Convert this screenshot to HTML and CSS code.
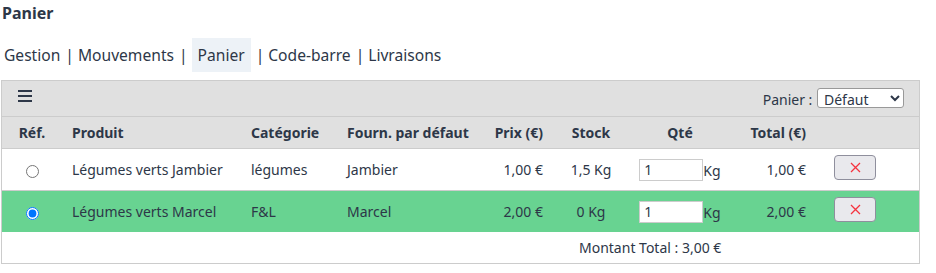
FILE: index.html
```html
<!DOCTYPE html>
<html>
<head>
  <meta charset="utf-8">
  <title>Panier</title>
  <link rel="stylesheet" href="styles.css">
</head>
<body>
  <h1 class="title">Panier</h1>
  <div class="nav">
    <span class="nav-item">Gestion</span><span class="sep">|</span><span class="nav-item">Mouvements</span><span class="sep">|</span><span class="nav-item active">Panier</span><span class="sep">|</span><span class="nav-item">Code-barre</span><span class="sep">|</span><span class="nav-item">Livraisons</span>
  </div>

  <div class="panel">
    <div class="toolbar">
      <div class="burger"><span></span><span></span><span></span></div>
      <label class="basket-select">Panier :
        <select>
          <option>Défaut</option>
        </select>
      </label>
    </div>
    <table class="cart">
      <colgroup>
        <col class="c-ref"><col class="c-prod"><col class="c-cat"><col class="c-four"><col class="c-prix"><col class="c-stock"><col class="c-qte"><col class="c-total"><col class="c-del">
      </colgroup>
      <thead>
        <tr>
          <th class="center">Réf.</th>
          <th>Produit</th>
          <th>Catégorie</th>
          <th>Fourn. par défaut</th>
          <th class="right">Prix (€)</th>
          <th class="center">Stock</th>
          <th class="center">Qté</th>
          <th class="right">Total (€)</th>
          <th></th>
        </tr>
      </thead>
      <tbody>
        <tr>
          <td class="center"><input type="radio" name="ref"></td>
          <td>Légumes verts Jambier</td>
          <td>légumes</td>
          <td>Jambier</td>
          <td class="right">1,00 €</td>
          <td class="center">1,5 Kg</td>
          <td class="center"><input class="qty" type="text" value="1">Kg</td>
          <td class="right">1,00 €</td>
          <td><button class="del"><svg width="11" height="11" viewBox="0 0 11 11"><path d="M1 1L10 10M10 1L1 10" stroke="#f5333f" stroke-width="1.3"/></svg></button></td>
        </tr>
        <tr class="selected">
          <td class="center"><input type="radio" name="ref" checked></td>
          <td>Légumes verts Marcel</td>
          <td>F&amp;L</td>
          <td>Marcel</td>
          <td class="right">2,00 €</td>
          <td class="center">0 Kg</td>
          <td class="center"><input class="qty" type="text" value="1">Kg</td>
          <td class="right">2,00 €</td>
          <td><button class="del"><svg width="11" height="11" viewBox="0 0 11 11"><path d="M1 1L10 10M10 1L1 10" stroke="#f5333f" stroke-width="1.3"/></svg></button></td>
        </tr>
      </tbody>
      <tfoot>
        <tr>
          <td colspan="9" class="sum">Montant Total : 3,00 €</td>
        </tr>
      </tfoot>
    </table>
  </div>
</body>
</html>
```

FILE: styles.css
```css
body {
  margin: 0;
  padding: 0 1px;
  font-family: "Noto Sans", "DejaVu Sans", sans-serif;
  color: #2d3748;
  background-color: #fff;
}

.title {
  margin: 0;
  padding-left: 1px;
  font-size: 16px;
  line-height: 26px;
  font-weight: bold;
}

.nav {
  display: flex;
  align-items: center;
  margin: 12px 0 8px;
  padding-left: 3px;
  font-size: 15.6px;
  height: 34px;
}

.nav-item {
  display: inline-block;
  line-height: 34px;
}

.nav-item.active {
  background-color: #edf2f7;
  padding: 0 6px;
}

.sep {
  padding: 0 4px 0 5px;
}

.panel {
  width: 917px;
  border: 1px solid #ccc;
  font-size: 14px;
}

.toolbar {
  display: flex;
  align-items: center;
  justify-content: space-between;
  height: 35px;
  padding: 0 15px 0 16px;
  background-color: #e0e0e0;
  border-bottom: 1px solid #ccc;
}

.burger {
  display: flex;
  flex-direction: column;
  gap: 3px;
  width: 14px;
  margin-top: -5px;
}

.burger span {
  height: 2px;
  background-color: #2d3748;
}

.basket-select select {
  width: 87px;
  height: 20px;
  margin-left: 1px;
  padding: 0 2px;
  font-family: inherit;
  font-size: 14px;
  color: #2d3748;
  background-color: #fff;
  border: 1px solid #999;
  border-radius: 3px;
}

.cart {
  width: 100%;
  border-collapse: collapse;
  table-layout: fixed;
}

.c-ref { width: 60px; }
.c-prod { width: 179px; }
.c-cat { width: 96px; }
.c-four { width: 123px; }
.c-prix { width: 93px; }
.c-stock { width: 76px; }
.c-qte { width: 102px; }
.c-total { width: 85px; }

.cart th,
.cart td {
  padding: 0 10px;
  text-align: left;
  white-space: nowrap;
}

.cart th {
  height: 31px;
  background-color: #e0e0e0;
  border-bottom: 1px solid #ccc;
  font-weight: bold;
}

.cart tbody td {
  height: 41px;
  border-bottom: 1px solid #ccc;
}

.cart tbody tr.selected td {
  border-bottom: none;
}

.cart .center { text-align: center; }
.cart .right { text-align: right; }

.cart input[type="radio"] {
  margin: 0;
  vertical-align: middle;
}

tr.selected td {
  background-color: #68d391;
}

.qty {
  width: 64px;
  height: 22px;
  box-sizing: border-box;
  padding: 0 4px;
  font-family: inherit;
  font-size: 14px;
  color: #2d3748;
  border: 1px solid #ccc;
  vertical-align: baseline;
}

.del {
  display: inline-flex;
  align-items: center;
  justify-content: center;
  width: 42px;
  height: 25px;
  margin-left: 8px;
  margin-top: -4px;
  padding: 0;
  vertical-align: middle;
  background-color: #e9e9ed;
  border: 1px solid #8f8f9d;
  border-radius: 4px;
}

.cart .sum {
  height: 31px;
  padding-left: 577px;
  padding-right: 0;
  text-align: left;
}
```
